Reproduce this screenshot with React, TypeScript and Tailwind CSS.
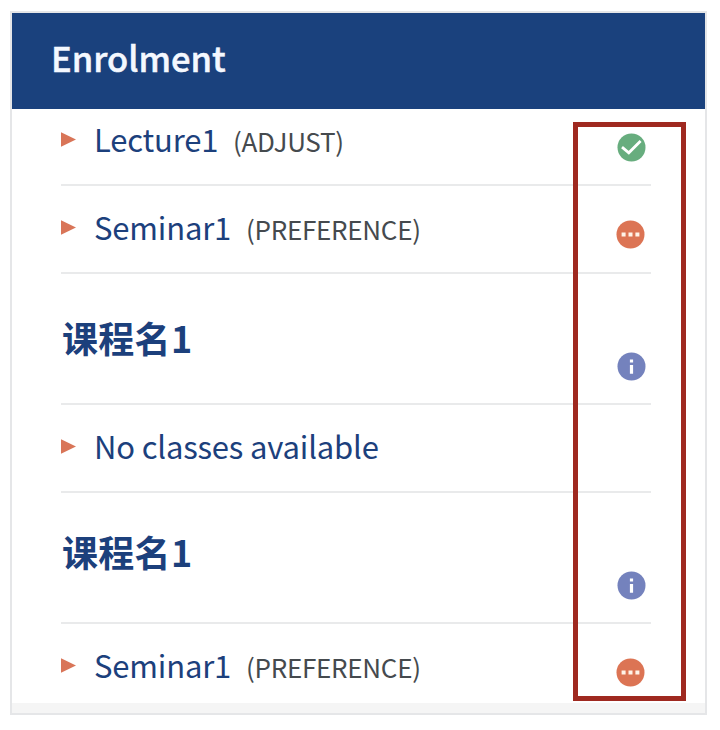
import clsx from "clsx";

type Status = "done" | "pending" | "info";

interface EnrolmentRow {
  kind: "class" | "course";
  title: string;
  note?: string;
  status?: Status;
  rowClass: string;
  titleClass?: string;
  iconClass?: string;
}

const rows: EnrolmentRow[] = [
  {
    kind: "class",
    title: "Lecture1",
    note: "(ADJUST)",
    status: "done",
    rowClass: "h-[77px] pt-[10px]",
    titleClass: "w-[139px]",
    iconClass: "mt-[14px]",
  },
  {
    kind: "class",
    title: "Seminar1",
    note: "(PREFERENCE)",
    status: "pending",
    rowClass: "h-[88px] pt-[21px]",
    titleClass: "w-[152px]",
    iconClass: "mt-[13px]",
  },
  {
    kind: "course",
    title: "课程名1",
    status: "info",
    rowClass: "h-[131px] pt-[43px]",
    iconClass: "mt-[35px]",
  },
  {
    kind: "class",
    title: "No classes available",
    rowClass: "h-[88px] pt-[21px]",
  },
  {
    kind: "course",
    title: "课程名1",
    status: "info",
    rowClass: "h-[131px] pt-[38px]",
    iconClass: "mt-[40px]",
  },
  {
    kind: "class",
    title: "Seminar1",
    note: "(PREFERENCE)",
    status: "pending",
    rowClass: "h-[79px] pt-[21px]",
    titleClass: "w-[152px]",
    iconClass: "mt-[13px]",
  },
];

function StatusIcon({ status, className }: { status: Status; className?: string }) {
  return (
    <svg
      viewBox="0 0 29 29"
      className={clsx("h-[29px] w-[29px] shrink-0", status === "pending" ? "mr-[6px]" : "mr-[5px]", className)}
    >
      {status === "done" && (
        <>
          <circle cx="14.5" cy="14.5" r="14" fill="#67ad7e" />
          <path d="M5 14.2 L11.8 19.8 L23.6 8" fill="none" stroke="#fff" strokeWidth="2.8" />
        </>
      )}
      {status === "pending" && (
        <>
          <circle cx="14.5" cy="14.5" r="14" fill="#dc7454" />
          <path d="M5.6 12.5h4v4h-4zM12.5 12.5h4v4h-4zM19.4 12.5h4v4h-4z" fill="#fff3e8" />
        </>
      )}
      {status === "info" && (
        <>
          <circle cx="14.5" cy="14.5" r="14" fill="#7482bd" />
          <path d="M12.9 7.5h3.2v3h-3.2zM12.9 13h3.2v8.7h-3.2z" fill="#fff" />
        </>
      )}
    </svg>
  );
}

function Row({ row }: { row: EnrolmentRow }) {
  return (
    <li
      className={clsx(
        "flex items-start border-b-2 border-[#e9eaeb] leading-[40px] text-[#1c407c] last:border-b-0",
        row.rowClass,
      )}
    >
      {row.kind === "class" ? (
        <>
          <svg viewBox="0 0 15 15" className="mt-[13px] mr-[18px] h-[15px] w-[15px] shrink-0">
            <path d="M0 0.3 L15 7.5 L0 14.7z" fill="#d97558" />
          </svg>
          <div className="flex items-baseline whitespace-nowrap">
            <span className={clsx("text-[31px] tracking-[-0.17px]", row.titleClass)}>{row.title}</span>
            {row.note && <span className="text-[26px] tracking-[-0.28px] text-[#454a4e]">{row.note}</span>}
          </div>
        </>
      ) : (
        <h2 className="pl-px text-[36px] tracking-[0.3px] font-bold whitespace-nowrap">{row.title}</h2>
      )}
      <div className="flex-1" />
      {row.status && <StatusIcon status={row.status} className={row.iconClass} />}
    </li>
  );
}

export default function App() {
  return (
    <div className="relative h-[730px] w-[720px] overflow-hidden bg-white pt-[11px] pl-[10px] font-['Noto_Sans_CJK_SC',sans-serif]">
      <section className="flex h-[704px] w-[697px] flex-col border-2 border-[#e5e6e8] bg-white">
        <header className="h-[96px] shrink-0 bg-[#1a417d] pt-[24px] pl-[39px]">
          <h1 className="text-[34.5px] leading-[40px] font-medium text-[#f4f8ff] [-webkit-text-stroke:0.5px_#f4f8ff]">
            Enrolment
          </h1>
        </header>
        <ul className="mr-[54px] ml-[49px]">
          {rows.map((row, i) => (
            <Row key={i} row={row} />
          ))}
        </ul>
        <div className="flex-1 bg-[#f5f5f5]" />
      </section>

      {/* highlight around the status column */}
      <div className="absolute top-[122px] left-[573px] h-[579px] w-[113px] border-5 border-[#9f2920]" />
    </div>
  );
}
